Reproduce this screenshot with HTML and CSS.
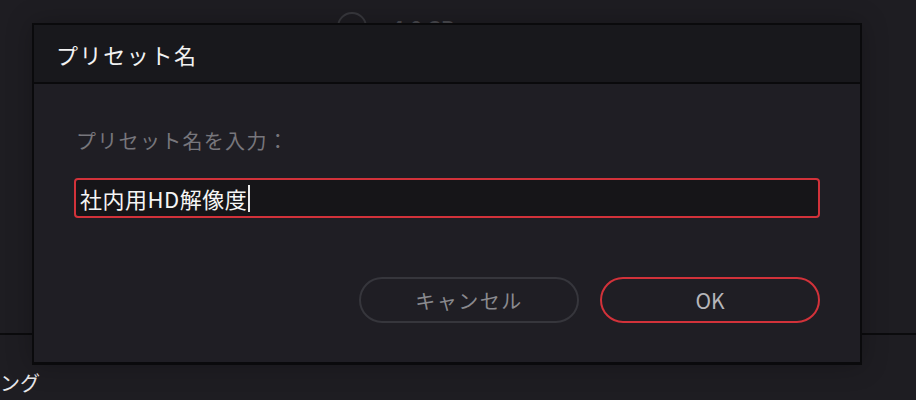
FILE: index.html
```html
<!DOCTYPE html>
<html lang="ja">
<head>
<meta charset="utf-8">
<title>プリセット名</title>
<link rel="stylesheet" href="styles.css">
</head>
<body>
<div class="page">
  <div class="top-row">
    <span class="disk-ring"></span>
    <span class="disk-text">4.0 GB</span>
  </div>
  <div class="divider"></div>
  <div class="bottom-text">ング</div>

  <div class="dialog">
    <div class="dialog-header">プリセット名</div>
    <div class="dialog-body">
      <div class="field-label">プリセット名を入力：</div>
      <div class="text-field"><span class="field-value">社内用HD解像度</span><span class="caret"></span></div>
      <div class="actions">
        <button class="btn btn-cancel">キャンセル</button>
        <button class="btn btn-ok">OK</button>
      </div>
    </div>
  </div>
</div>
</body>
</html>
```
FILE: styles.css
```css
* { box-sizing: border-box; }
html, body { margin: 0; padding: 0; }
body {
  background: #1e1d22;
  font-family: "Noto Sans CJK JP", "Noto Sans", sans-serif;
}
.page {
  position: relative;
  width: 916px;
  height: 400px;
  overflow: hidden;
  background: #1e1d22;
}
.top-row {
  display: flex;
  align-items: flex-start;
  gap: 25px;
  padding: 12px 0 0 337px;
  height: 60px;
}
.disk-ring {
  width: 30px;
  height: 30px;
  border: 2px solid #38383d;
  border-radius: 50%;
}
.disk-text {
  font-size: 20px;
  line-height: 28px;
  color: #4a4a50;
  font-weight: 700;
  margin-top: 2px;
}
.divider {
  margin-top: 273px;
  height: 2px;
  background: #0b0b0d;
}
.bottom-text {
  margin-top: 34px;
  font-size: 20px;
  line-height: 28px;
  color: #e8e8ea;
}
.dialog {
  position: absolute;
  left: 32px;
  top: 23px;
  width: 830px;
  height: 342px;
  border: 2px solid #0a0a0c;
  border-bottom-width: 3px;
  background: #1f1e24;
  box-shadow: 0 0 24px rgba(0, 0, 0, 0.25);
  display: flex;
  flex-direction: column;
}
.dialog-header {
  height: 59px;
  background: #18181c;
  border-bottom: 2px solid #0a0a0c;
  padding-left: 22px;
  display: flex;
  align-items: center;
  font-size: 22px;
  letter-spacing: 1.6px;
  color: #f2f2f2;
}
.dialog-body {
  padding: 43px 40px 0 40px;
  display: flex;
  flex-direction: column;
}
.field-label {
  margin-left: 2px;
  font-size: 20px;
  line-height: 28px;
  letter-spacing: 1.3px;
  color: #77767c;
}
.text-field {
  margin-top: 23px;
  height: 40px;
  border: 2px solid #d2323a;
  border-radius: 4px;
  background: #161518;
  padding-left: 4px;
  display: flex;
  align-items: center;
}
.field-value {
  font-size: 22px;
  line-height: 28px;
  letter-spacing: 0.5px;
  color: #f5f5f5;
}
.caret {
  width: 2px;
  height: 27px;
  margin-left: 1px;
  background: #e8e8e8;
}
.actions {
  margin-top: 59px;
  display: flex;
  justify-content: flex-end;
  gap: 21px;
}
.btn {
  width: 220px;
  height: 46px;
  border-radius: 23px;
  background: transparent;
  font-family: "Noto Sans CJK JP", "Noto Sans", sans-serif;
  font-size: 20px;
  letter-spacing: 1.5px;
  padding: 0;
  display: flex;
  align-items: center;
  justify-content: center;
}
.btn-cancel {
  border: 2px solid #36363c;
  color: #8a8a8f;
}
.btn-ok {
  border: 2px solid #d2323a;
  color: #b6b6ba;
  font-size: 21px;
  letter-spacing: 0;
}
```
